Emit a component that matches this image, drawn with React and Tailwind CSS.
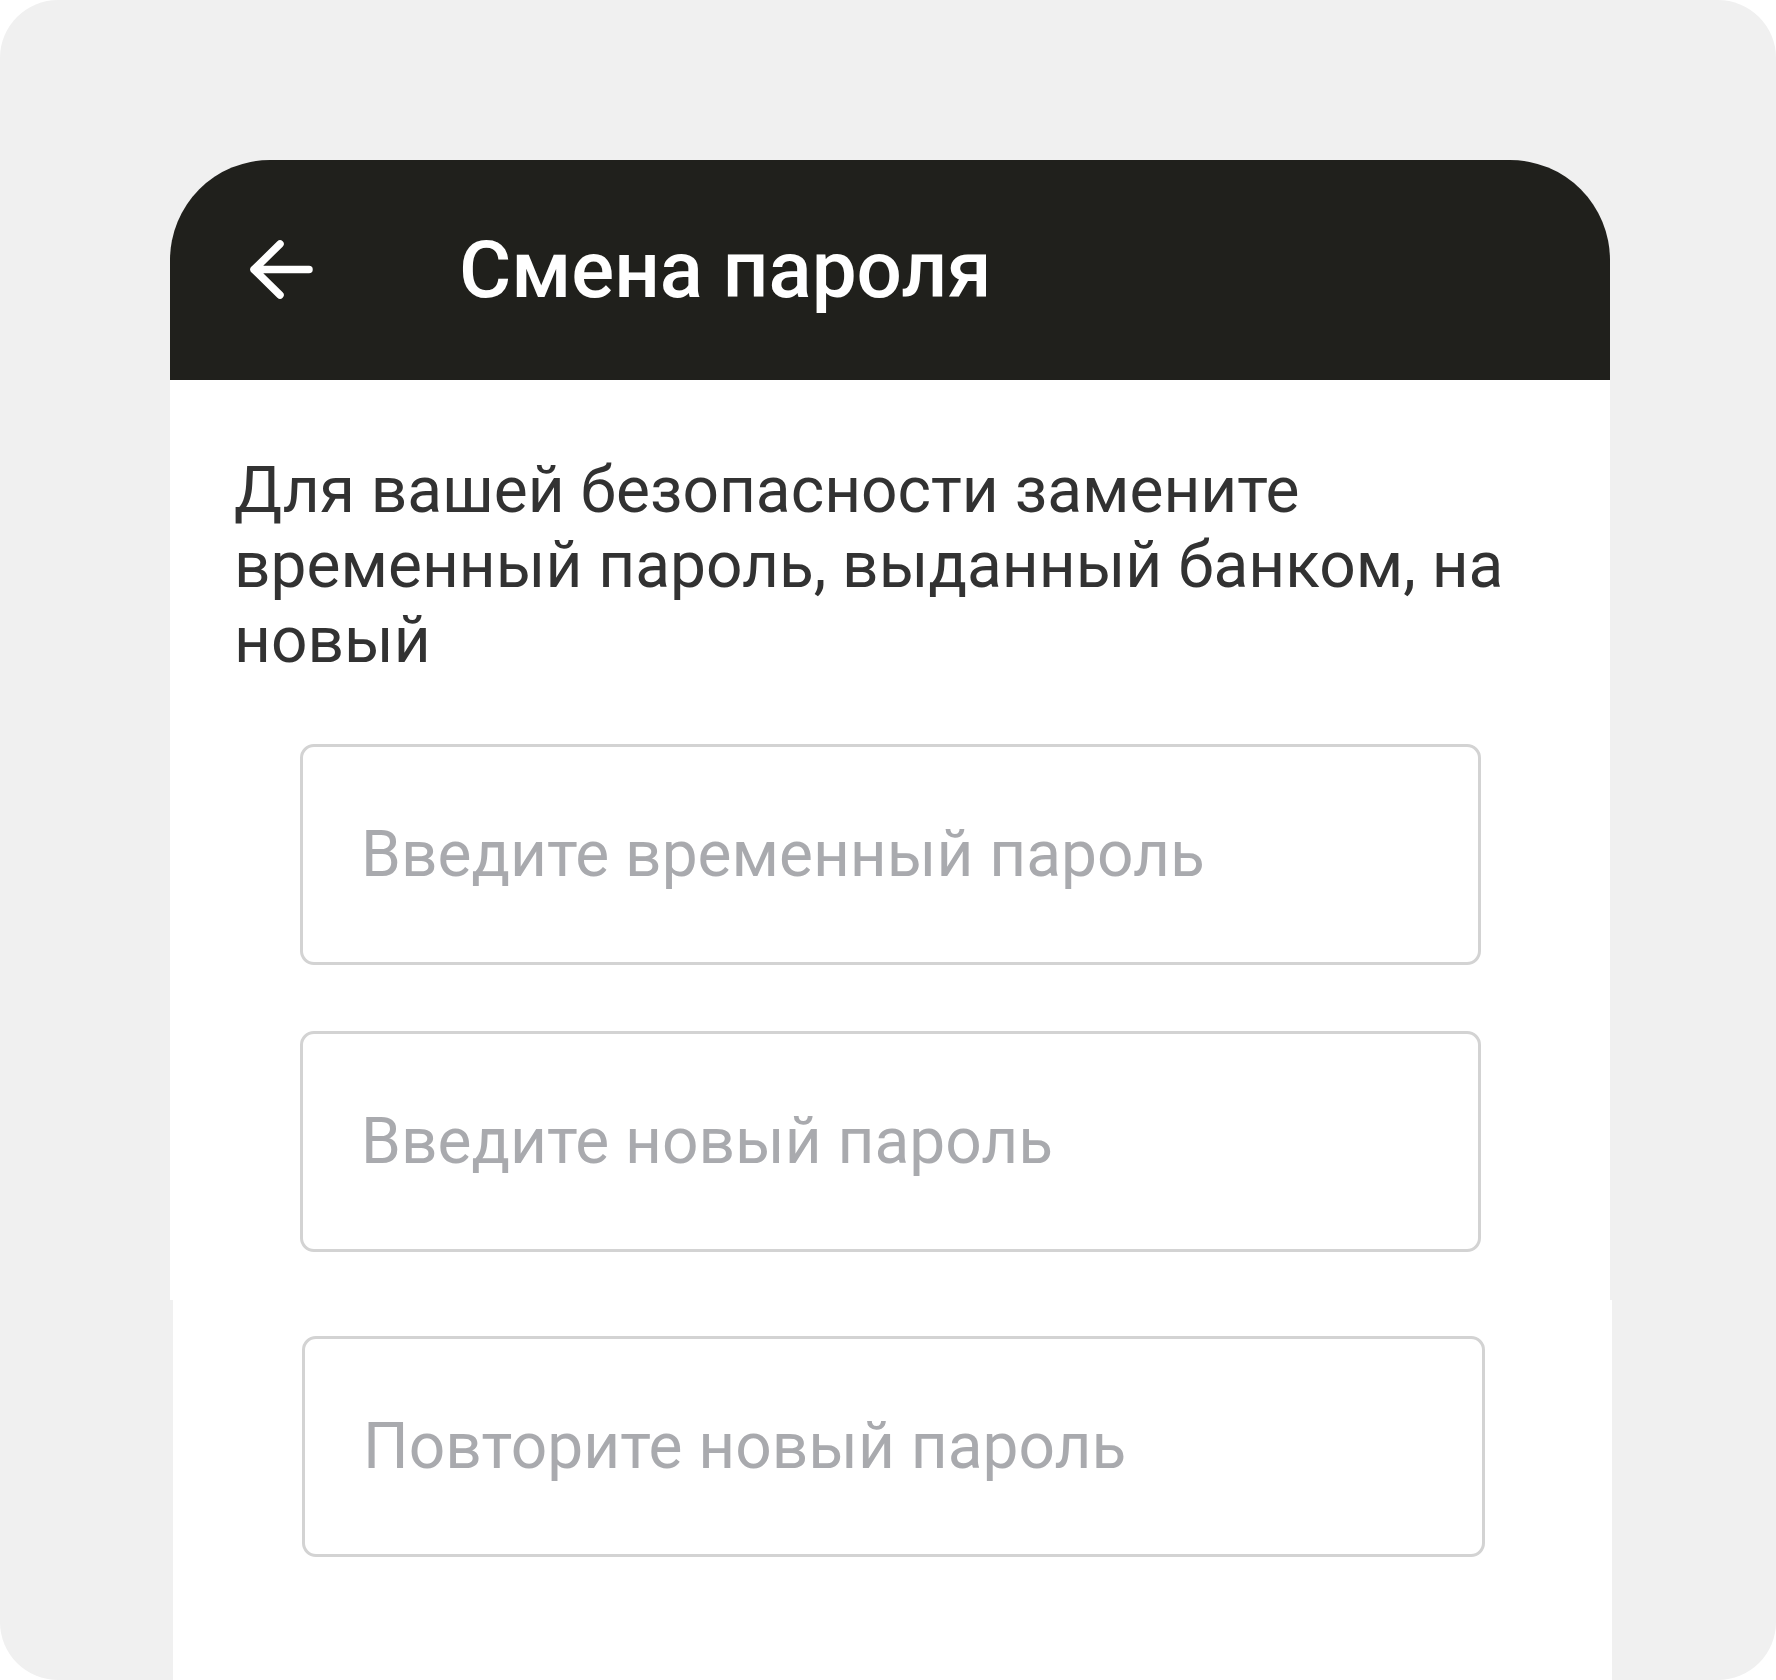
import React from 'react';

function BackArrow() {
  return (
    <svg width="64" height="60" viewBox="0 0 64 60" fill="none" className="shrink-0">
      <path
        d="M31 4 L5 29.5 L31 55 M5 29.5 H60"
        stroke="white"
        strokeWidth="7.5"
        strokeLinecap="round"
        strokeLinejoin="round"
      />
    </svg>
  );
}

function Field({ placeholder, wide }) {
  return (
    <input
      type="password"
      placeholder={placeholder}
      className={`block h-[221px] rounded-[14px] border-[3px] border-[#d3d3d3] bg-white pl-[58px] text-[64px] text-[#333] placeholder:text-[#a9aaae] outline-none ${
        wide ? 'w-[1183px]' : 'w-[1181px]'
      }`}
      style={{ fontFamily: 'Roboto, sans-serif' }}
    />
  );
}

export default function App() {
  return (
    <div className="min-h-screen bg-white" style={{ fontFamily: 'Roboto, "Noto Sans", sans-serif' }}>
      <div className="h-[1680px] overflow-hidden rounded-[58px] bg-[#f0f0f0] pt-[160px] pl-[170px]">
        <div className="w-[1440px]">
          <div className="flex h-[220px] items-center rounded-t-[100px] bg-[#20201c] pl-[79px]">
            <BackArrow />
            <h1 className="ml-[146px] text-[80px] font-medium leading-none text-white">Смена пароля</h1>
          </div>

          <div className="h-[920px] bg-white pt-[73px]">
            <p className="w-[1390px] pl-[64px] text-[64px] leading-[75px] text-[#323232]">
              Для вашей безопасности замените временный пароль, выданный банком, на новый
            </p>
            <div className="mt-[66px] flex flex-col gap-[66px] pl-[130px]">
              <Field placeholder="Введите временный пароль" />
              <Field placeholder="Введите новый пароль" />
            </div>
          </div>
        </div>

        <div className="ml-[3px] h-[380px] w-[1439px] bg-white pt-[36px] pl-[129px]">
          <Field placeholder="Повторите новый пароль" wide />
        </div>
      </div>
    </div>
  );
}
